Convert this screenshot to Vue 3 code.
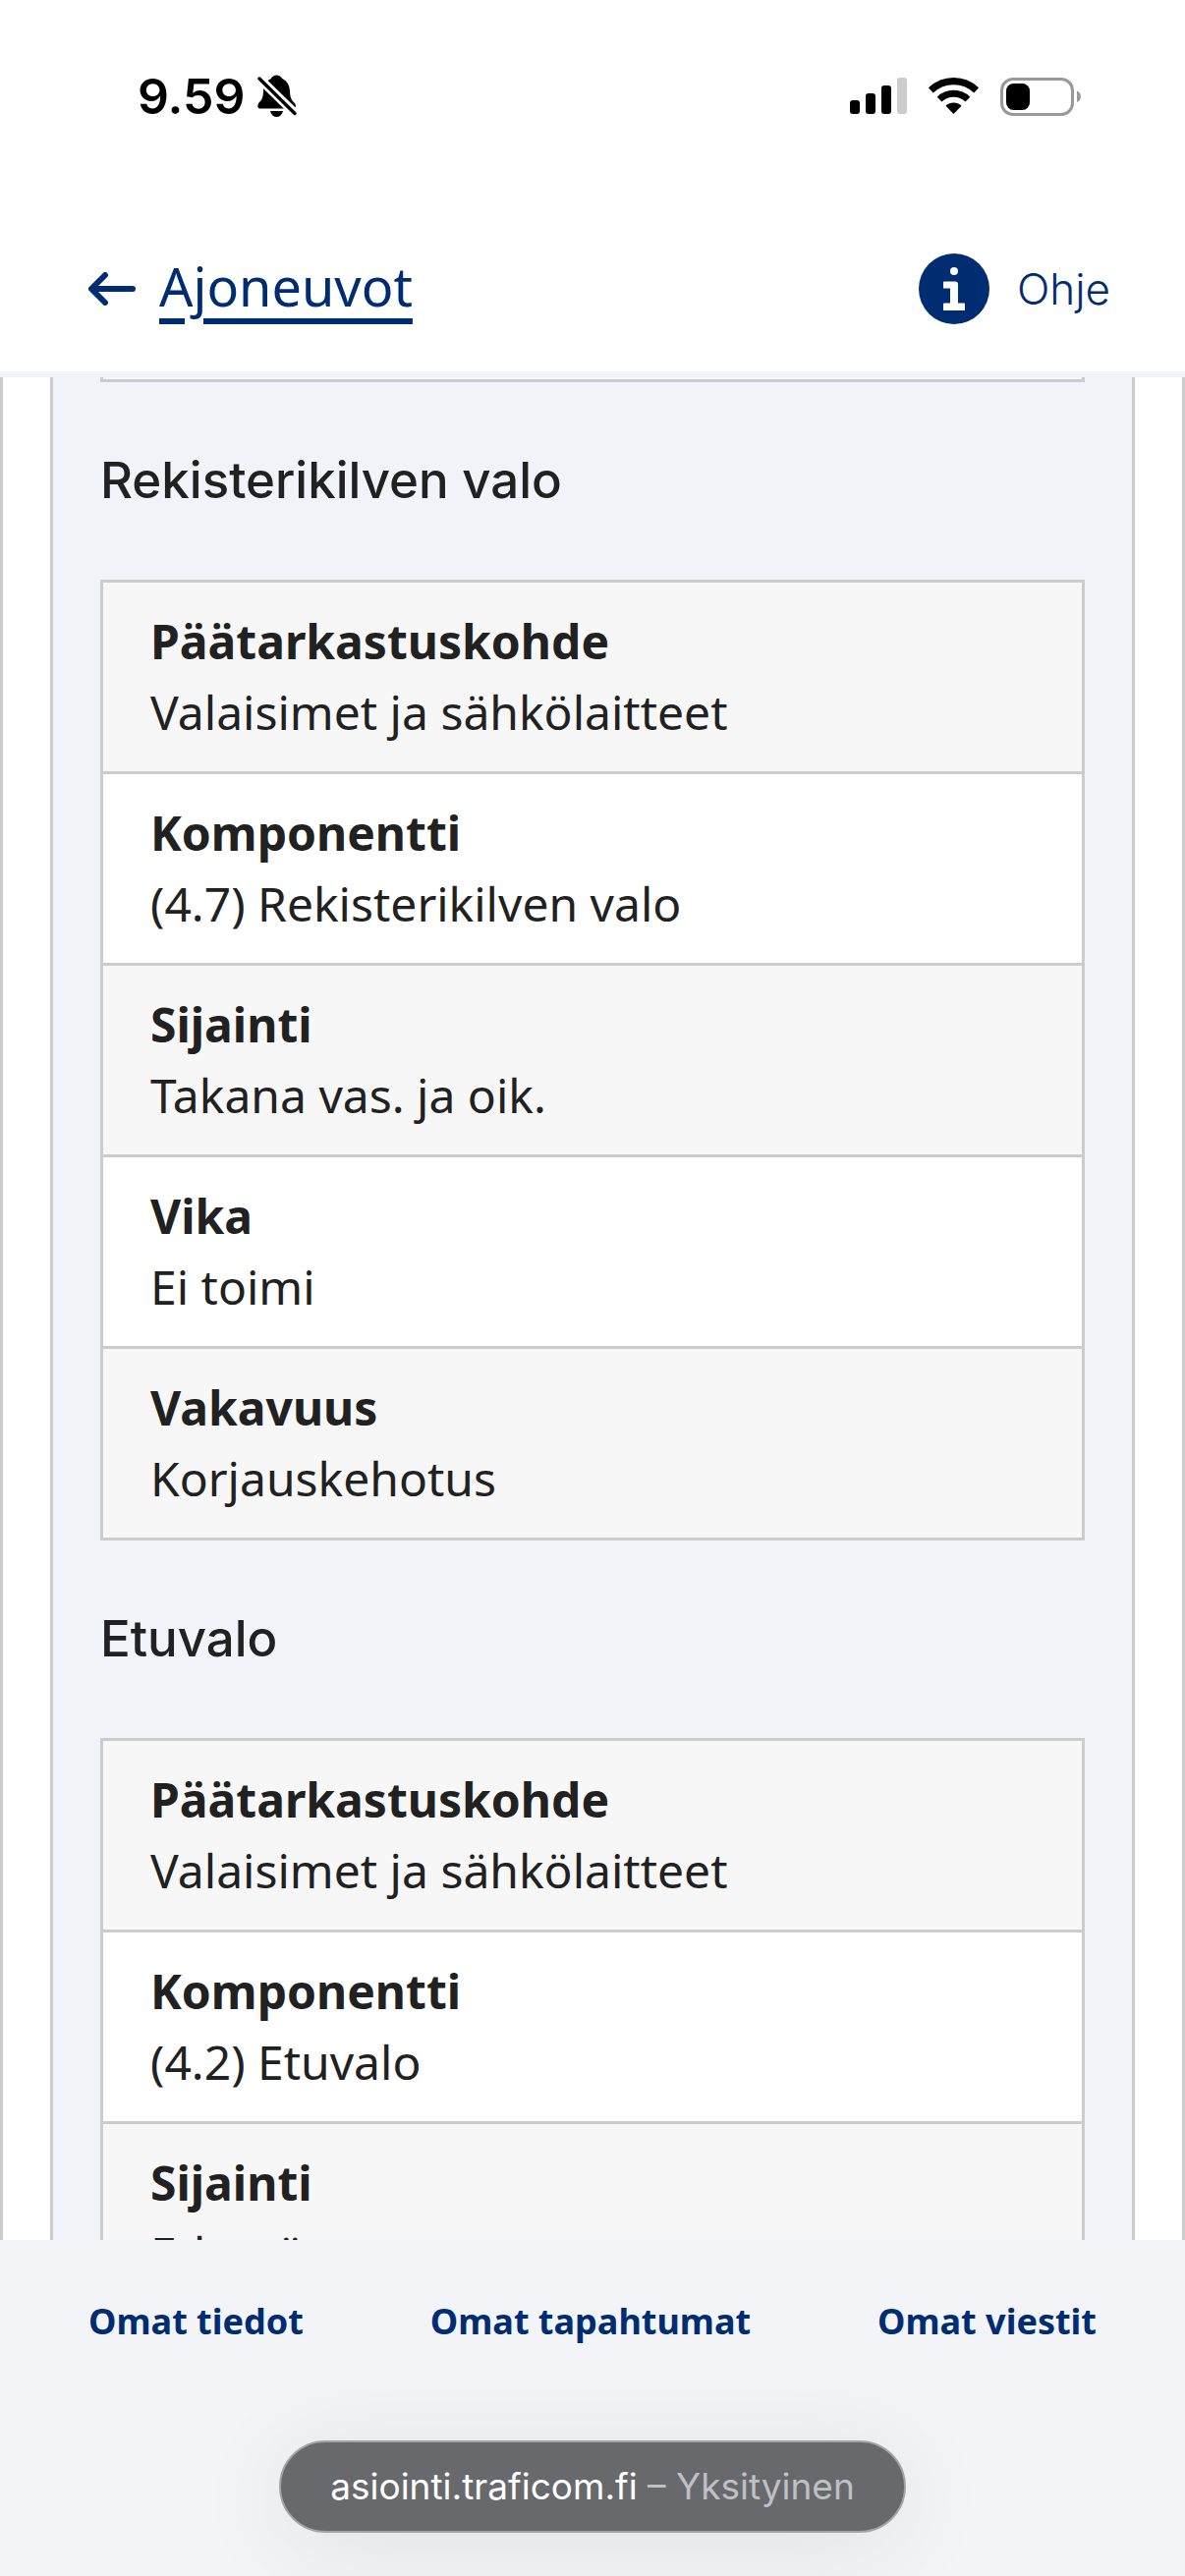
<script setup>
const sections = [
  {
    title: 'Rekisterikilven valo',
    rows: [
      { label: 'Päätarkastuskohde', value: 'Valaisimet ja sähkölaitteet' },
      { label: 'Komponentti', value: '(4.7) Rekisterikilven valo' },
      { label: 'Sijainti', value: 'Takana vas. ja oik.' },
      { label: 'Vika', value: 'Ei toimi' },
      { label: 'Vakavuus', value: 'Korjauskehotus' },
    ],
  },
  {
    title: 'Etuvalo',
    rows: [
      { label: 'Päätarkastuskohde', value: 'Valaisimet ja sähkölaitteet' },
      { label: 'Komponentti', value: '(4.2) Etuvalo' },
      { label: 'Sijainti', value: 'Edessä' },
    ],
  },
]

const links = ['Omat tiedot', 'Omat tapahtumat', 'Omat viestit']
</script>

<template>
  <div class="screen">
    <div class="status">
      <div class="status-time">
        <span>9.59</span>
        <svg width="40" height="44" viewBox="0 0 40 44" aria-hidden="true">
          <path d="M19.5 0.5C22 .5 24 2 25.200 4C30 6 32.800 11 33 17C33.200 23 34.500 26 37.500 28.500C40 31.500 39 34.500 36 34.500H3C0 34.500-.5 31.500 1.500 28.500C4.500 26 5.800 23 6 17C6.200 11 9 6 13.800 4C15 2 17 .5 19.500 .5Z" />
          <path d="M13 37H26C25 41 22.500 43 19.500 43C16.500 43 14 41 13 37Z" />
          <path d="M-1 1L41 42" stroke="#fff" stroke-width="9" />
          <path d="M2 4L38 39.500" stroke="#000" stroke-width="3.400" stroke-linecap="round" />
        </svg>
      </div>
      <div class="status-icons">
        <svg width="58" height="38" viewBox="0 0 58 38" aria-hidden="true">
          <rect x="0" y="23" width="10" height="14" rx="3" />
          <rect x="16" y="16" width="10" height="21" rx="3" />
          <rect x="32" y="8" width="10" height="29" rx="3" />
          <rect x="48" y="0" width="10" height="37" rx="3" fill="#ccc" />
        </svg>
        <svg width="51" height="38" viewBox="0 0 51 38" aria-hidden="true">
          <path d="M2.300 13A33.400 33.400 0 0 1 48.700 13" fill="none" stroke="#000" stroke-width="7.200" />
          <path d="M11.100 22.100A20.700 20.700 0 0 1 39.900 22.100" fill="none" stroke="#000" stroke-width="6.800" />
          <path d="M25.500 37L17.500 28.700A11.500 11.500 0 0 1 33.500 28.700Z" />
        </svg>
        <svg width="82" height="39" viewBox="0 0 82 39" aria-hidden="true">
          <rect x="1.500" y="1.500" width="72" height="36" rx="11.500" fill="none" stroke="#999" stroke-width="3" />
          <rect x="6" y="6" width="24" height="27" rx="7.500" />
          <path d="M78 13.500C83.300 15.500 83.300 23 78 25Z" fill="#999" />
        </svg>
      </div>
    </div>

    <header class="header">
      <a class="back" href="#">
        <svg width="48" height="34" viewBox="0 0 48 34" aria-hidden="true">
          <path d="M45 17H4M17 3L3 17L17 31" fill="none" stroke="currentColor" stroke-width="6" stroke-linecap="round" stroke-linejoin="round" />
        </svg>
        <span class="back-text">Ajoneuvot</span>
      </a>
      <button class="help" type="button">
        <svg width="72" height="72" viewBox="0 0 72 72" aria-hidden="true">
          <circle cx="36" cy="36" r="36" fill="#002d72" />
          <circle cx="36" cy="18" r="4" fill="#fff" />
          <path d="M26 28.500H37C39 28.500 40 29.500 40 31.500V50.500H46Q47 50.500 47 51.500V58H25V51.500Q25 50.500 26 50.500H32V35.500H25V29.500Q25 28.500 26 28.500Z" fill="#fff" />
        </svg>
        <span>Ohje</span>
      </button>
    </header>

    <main class="content">
      <div class="panel">
        <div class="table-end"></div>
        <section v-for="section in sections" :key="section.title">
          <h3 class="title">{{ section.title }}</h3>
          <table class="table">
            <tbody>
              <tr v-for="row in section.rows" :key="row.label" class="row">
                <th scope="row">{{ row.label }}</th>
                <td>{{ row.value }}</td>
              </tr>
            </tbody>
          </table>
        </section>
      </div>
    </main>

    <footer class="footer">
      <nav class="nav">
        <a v-for="link in links" :key="link" href="#">{{ link }}</a>
      </nav>
      <button class="address" type="button">
        asiointi.traficom.fi <span class="mode">– Yksityinen</span>
      </button>
    </footer>
  </div>
</template>

<style>
body {
  margin: 0;
}
</style>

<style scoped>
.screen {
  display: flex;
  flex-direction: column;
  height: 100vh;
  background: #fff;
  color: #212121;
  font-family: "Noto Sans", "Open Sans", sans-serif;
}

svg {
  display: block;
  flex: none;
}

.status {
  flex: none;
  display: flex;
  justify-content: space-between;
  align-items: center;
  padding: 62px 106px 76px 140px;
  color: #000;
}

.status-time {
  display: flex;
  align-items: center;
  gap: 12px;
  font: 600 50px/72px Inter, sans-serif;
}

.status-icons {
  display: flex;
  align-items: center;
  gap: 22px;
}

.header {
  flex: none;
  display: flex;
  justify-content: space-between;
  align-items: center;
  padding: 48px 76px 48px 90px;
  border-bottom: 6px solid #f2f3f8;
  color: #002d72;
}

.back {
  display: flex;
  align-items: center;
  gap: 24px;
  color: inherit;
  text-decoration: none;
}

.back-text {
  padding-bottom: 6px;
  font-size: 54px;
  line-height: 66px;
  text-decoration: underline;
  text-decoration-thickness: 6px;
  text-underline-offset: 12px;
}

.help {
  display: flex;
  align-items: center;
  gap: 28px;
  padding: 0;
  border: 0;
  background: none;
  color: inherit;
  font: 300 44px/72px Inter, sans-serif;
}

.content {
  flex: 1;
  min-height: 0;
  overflow: hidden;
  padding: 0 48px;
  border: solid #ccc;
  border-width: 0 3px;
}

.panel {
  padding: 0 48px;
  border: solid #ccc;
  border-width: 0 3px;
  background: #f2f3f8;
}

.table-end {
  height: 2px;
  border: 3px solid #ccc;
  border-top: 0;
  background: #f7f7f7;
}

.title {
  margin: 0;
  padding: 64px 0 65px;
  font: 500 51px/72px Inter, sans-serif;
}

.table {
  display: block;
  border: 3px solid #ccc;
  border-bottom: 0;
  font-size: 48px;
  line-height: 72px;
}

.table tbody,
.row,
.row th,
.row td {
  display: block;
}

.row {
  padding: 24px 48px;
  border-bottom: 3px solid #ccc;
  background: #fff;
}

.row:nth-child(odd) {
  background: #f7f7f7;
}

.row th,
.row td {
  padding: 0;
  text-align: left;
}

.row th {
  font-weight: 700;
}

.footer {
  flex: none;
  display: flex;
  flex-direction: column;
  align-items: center;
  overflow: hidden;
  padding: 56px 90px 44px;
  background: #f2f4f8;
}

.nav {
  display: flex;
  justify-content: space-between;
  align-self: stretch;
  font-size: 36px;
  font-weight: 700;
  line-height: 54px;
}

.nav a {
  color: #002d72;
  text-decoration: none;
}

.address {
  margin-top: 94px;
  padding: 18px 50px;
  border: 2px solid #a3a4a8;
  border-radius: 47px;
  background: #68696d;
  box-shadow: 0 12px 100px rgba(0, 0, 0, 0.08);
  color: #fff;
  font: 400 37px/54px Inter, sans-serif;
}

.mode {
  color: #bfc0c4;
}
</style>
